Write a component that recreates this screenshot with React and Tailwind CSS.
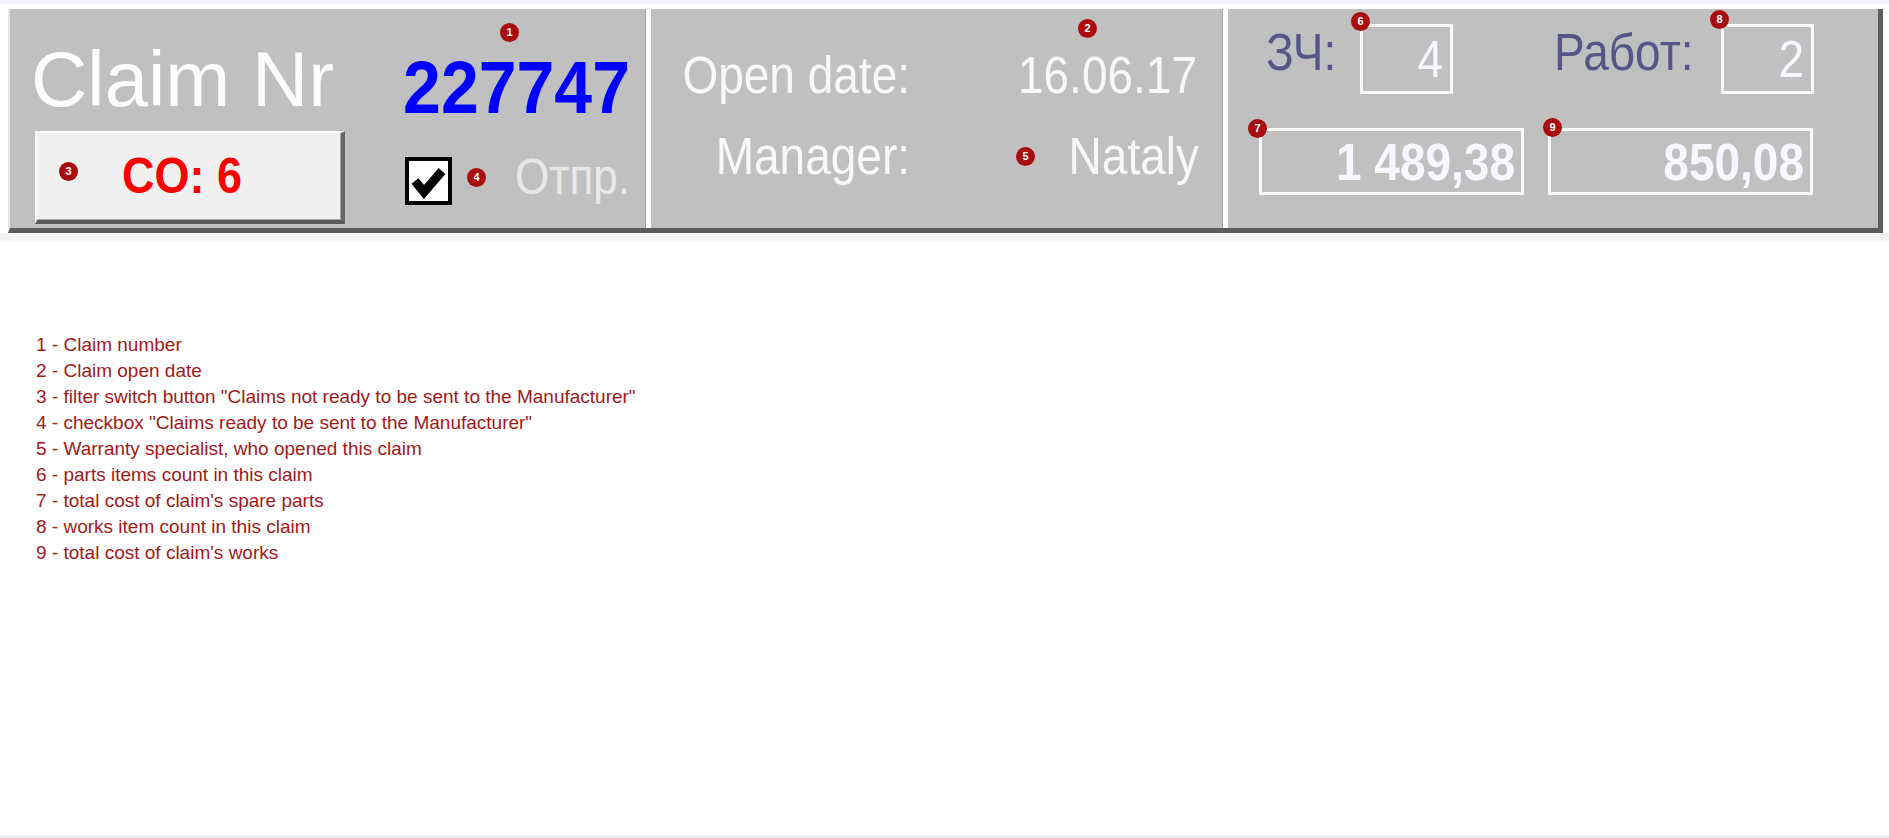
import React from "react";

function Badge({ n, className }) {
  return (
    <div
      className={
        "absolute w-[19px] h-[19px] rounded-full bg-[#a80c0c] text-white text-[11px] font-bold leading-none flex items-center justify-center " +
        className
      }
    >
      {n}
    </div>
  );
}

function CheckBox() {
  return (
    <div className="w-[47px] h-[48px] border-[4px] border-black bg-white flex items-center justify-center">
      <svg width="39" height="40" viewBox="0 0 39 40">
        <polyline points="6,20 15,31 33,10" fill="none" stroke="black" strokeWidth="9" strokeLinejoin="miter" />
      </svg>
    </div>
  );
}

function ValueBox({ children, className, bold }) {
  return (
    <div
      className={
        "border-[3px] border-[#fbfbfb] flex items-center justify-end text-[#f7f7ff] text-[46px] leading-none whitespace-nowrap " +
        (bold ? "font-bold " : "") +
        className
      }
    >
      <div className="scale-y-[1.12]">{children}</div>
    </div>
  );
}

const legend = [
  "1 - Claim number",
  "2 - Claim open date",
  '3 - filter switch button "Claims not ready to be sent to the Manufacturer"',
  '4 - checkbox "Claims ready to be sent to the Manufacturer"',
  "5 - Warranty specialist, who opened this claim",
  "6 - parts items count in this claim",
  "7 - total cost of claim's spare parts",
  "8 - works item count in this claim",
  "9 - total cost of claim's works",
];

export default function App() {
  return (
    <div className="relative w-[1889px] h-[838px] bg-white flex flex-col overflow-hidden font-['Liberation_Sans',Arial,sans-serif]">
      <div className="h-[4px] bg-[#eef2f7]" />
      <div className="pt-[5px] pl-[8px]">
        <div className="w-[1875px] h-[224px] flex bg-[#c0c0c0] border-l-2 border-l-[#e4e4e4] border-r-[5px] border-r-[#5d5d5d] border-b-[5px] border-b-[#5a5a5a]">
          {/* claim number + filter */}
          <div className="w-[635px] flex flex-col">
            <div className="h-[122px] flex justify-between items-start">
              <div className="ml-[21px] mt-[31px] text-[78px] leading-none text-[#fdfdfd]">Claim Nr</div>
              <div className="mr-[15px] mt-[44px] text-[68px] leading-none font-bold text-[#0000ff] scale-y-[1.1]">227747</div>
            </div>
            <div className="flex items-start">
              <button className="ml-[25px] w-[310px] h-[93px] bg-[#f0f0f0] border-t-2 border-l-2 border-t-white border-l-white border-r-[4px] border-r-[#666] border-b-[4px] border-b-[#595959] shadow-[inset_-1px_-1px_0_#a8a8a8] flex items-center justify-center pr-[14px] pb-[2px]">
                <span className="block text-[45px] leading-none font-bold text-[#ff0000] scale-y-[1.12]">CO: 6</span>
              </button>
              <div className="ml-[60px] mt-[26px]">
                <CheckBox />
              </div>
              <div className="ml-auto mr-[15px] mt-[24px] text-[44px] leading-none text-[#e8e8e8] scale-y-[1.12]">Отпр.</div>
            </div>
          </div>

          <div className="w-[6px] border-l border-l-[#a4a4a4] bg-white" />

          {/* date + manager */}
          <div className="w-[571px] pt-[43px] grid grid-cols-[259px_289px] gap-y-[35px] content-start text-[46px] leading-none text-[#f8f8f8] whitespace-nowrap">
            <div className="text-right scale-y-[1.14]">Open date:</div>
            <div className="text-right pr-[2px] scale-y-[1.14]">16.06.17</div>
            <div className="text-right scale-y-[1.14]">Manager:</div>
            <div className="text-right scale-y-[1.14]">Nataly</div>
          </div>

          <div className="w-[6px] border-l border-l-[#a4a4a4] bg-white" />

          {/* parts / works */}
          <div className="w-[650px] pt-[15px] flex flex-col text-[46px]">
            <div className="flex items-start">
              <div className="ml-[38px] mt-[5px] w-[94px] leading-none text-[#55558a] scale-y-[1.12] origin-left">ЗЧ:</div>
              <ValueBox className="w-[93px] h-[70px] pr-[7px]">4</ValueBox>
              <div className="ml-[101px] mt-[5px] w-[167px] leading-none text-[#55558a] scale-y-[1.12] origin-left">Работ:</div>
              <ValueBox className="w-[93px] h-[70px] pr-[7px]">2</ValueBox>
            </div>
            <div className="mt-[34px] ml-[31px] flex gap-[24px]">
              <ValueBox bold className="w-[265px] h-[67px] pr-[6px]">1 489,38</ValueBox>
              <ValueBox bold className="w-[265px] h-[67px] pr-[6px]">850,08</ValueBox>
            </div>
          </div>
        </div>
      </div>
      <div className="h-[8px] bg-[#f2f2f2]" />

      <div className="mt-[91px] pl-[36px] flex flex-col text-[19px] leading-[26px] text-[#a31818]">
        {legend.map((t) => (
          <div key={t}>{t}</div>
        ))}
      </div>
      <div className="flex-1" />
      <div className="h-[3px] bg-[#e8edf3]" />

      <Badge n="1" className="left-[500px] top-[23px]" />
      <Badge n="2" className="left-[1078px] top-[19px]" />
      <Badge n="3" className="left-[59px] top-[162px]" />
      <Badge n="4" className="left-[467px] top-[168px]" />
      <Badge n="5" className="left-[1016px] top-[147px]" />
      <Badge n="6" className="left-[1351px] top-[12px]" />
      <Badge n="7" className="left-[1248px] top-[119px]" />
      <Badge n="8" className="left-[1710px] top-[10px]" />
      <Badge n="9" className="left-[1543px] top-[118px]" />
    </div>
  );
}
